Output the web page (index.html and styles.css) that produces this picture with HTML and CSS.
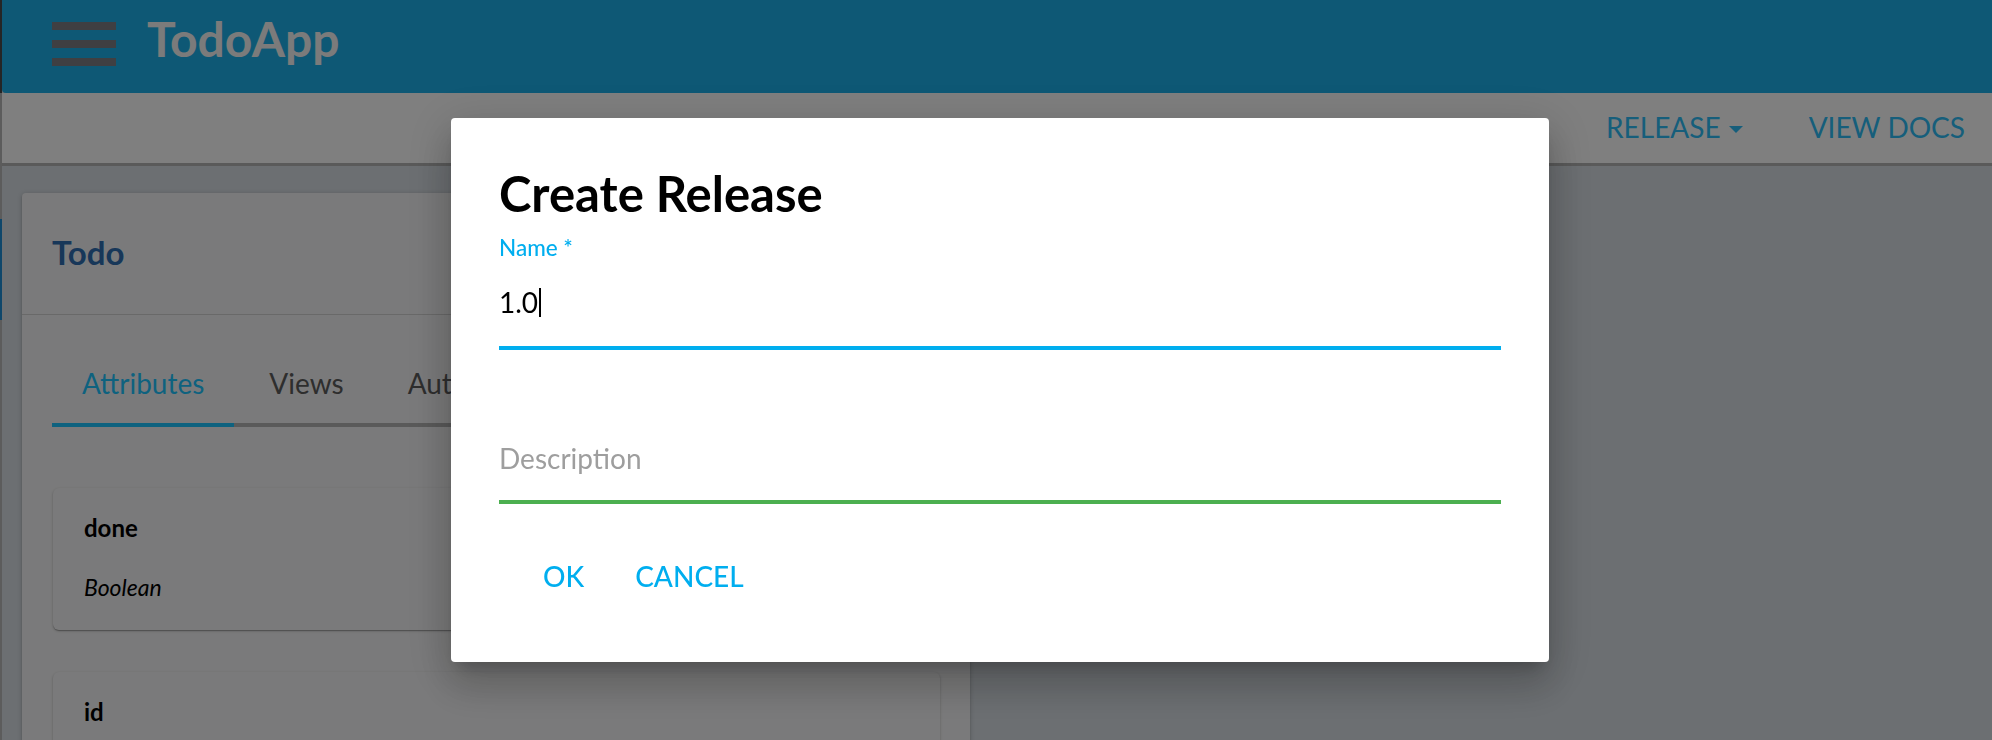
FILE: index.html
```html
<!DOCTYPE html>
<html lang="en">
<head>
<meta charset="utf-8">
<title>TodoApp</title>
<link rel="stylesheet" href="styles.css">
</head>
<body>
<div class="edge"><span class="edge-top"></span><span class="edge-mid"></span><span class="edge-blue"></span><span class="edge-low"></span></div>
<div class="app">
  <header class="appbar">
    <span class="burger"><i></i><i></i><i></i></span>
    <span class="brand">TodoApp</span>
  </header>
  <nav class="toolbar">
    <a class="tb-btn">RELEASE<span class="caret"></span></a>
    <a class="tb-btn">VIEW DOCS</a>
  </nav>
  <main class="content">
    <section class="card">
      <div class="card-head"><h2 class="card-title">Todo</h2></div>
      <div class="card-body">
        <div class="tabs">
          <div class="tab active">Attributes</div>
          <div class="tab second">Views</div>
          <div class="tab third">Authorization</div>
          <div class="tab-rest"></div>
        </div>
        <div class="attr-list">
          <div class="attr">
            <div class="attr-name">done</div>
            <div class="attr-type">Boolean</div>
          </div>
          <div class="attr">
            <div class="attr-name">id</div>
          </div>
        </div>
      </div>
    </section>
  </main>
</div>
<div class="backdrop">
  <div class="dialog">
    <h1 class="dialog-title">Create Release</h1>
    <div class="field focused">
      <div class="field-label">Name *</div>
      <div class="field-input">1.0<span class="cursor"></span></div>
    </div>
    <div class="field desc">
      <div class="field-placeholder">Description</div>
    </div>
    <div class="actions">
      <button class="btn">OK</button>
      <button class="btn">CANCEL</button>
    </div>
  </div>
</div>
</body>
</html>
```
FILE: styles.css
```css
html, body {
  margin: 0;
  height: 100%;
}
body {
  font-family: Lato, "Liberation Sans", sans-serif;
  background: #d8dee4;
  display: flex;
  overflow: hidden;
  line-height: 1.2;
}
.edge {
  width: 2px;
  display: flex;
  flex-direction: column;
  flex: none;
}
.edge-top { height: 93px; background: #4a4a4a; }
.edge-mid { height: 126px; background: #b8b8b8; }
.edge-blue { height: 101px; background: #1d8fd6; }
.edge-low { flex: 1; background: #b8b8b8; }

.app {
  flex: 1;
  display: flex;
  flex-direction: column;
  min-width: 0;
}
.appbar {
  height: 93px;
  box-sizing: border-box;
  background: #1cb0ea;
  display: flex;
  align-items: center;
  padding: 0 0 5px 50px;
  border-radius: 0 0 0 4px;
  flex: none;
}
.burger {
  display: flex;
  flex-direction: column;
  gap: 10px;
  width: 64px;
}
.burger i {
  display: block;
  height: 8px;
  background: #7e7e84;
}
.brand {
  margin-left: 31px;
  margin-bottom: 11px;
  font-size: 48px;
  font-weight: 700;
  color: #f6f6f6;
}
.toolbar {
  height: 70px;
  flex: none;
  background: #fff;
  border-bottom: 3px solid #b4b4b4;
  display: flex;
  justify-content: flex-end;
  align-items: center;
  gap: 66px;
  padding-right: 27px;
}
.tb-btn {
  font-size: 28px;
  color: #2cbcf6;
  display: flex;
  align-items: center;
}
.caret {
  width: 0;
  height: 0;
  border-left: 7.5px solid transparent;
  border-right: 7.5px solid transparent;
  border-top: 7px solid #2cbcf6;
  margin-left: 8px;
  margin-top: 3px;
}
.content {
  padding: 27px 0 0 20px;
}
.card {
  width: 948px;
  background: #f5f5f6;
  border-radius: 4px;
  box-shadow: 0 1px 5px rgba(0,0,0,0.2), 0 2px 2px rgba(0,0,0,0.14);
  padding-bottom: 40px;
}
.card-head {
  height: 122px;
  box-sizing: border-box;
  border-bottom: 1px solid #d2d2d2;
  display: flex;
  align-items: center;
  padding: 0 30px 2px;
}
.card-title {
  margin: 0;
  font-size: 33px;
  font-weight: 700;
  color: #2f6eb2;
}
.card-body {
  padding: 29px 30px 0;
}
.tabs {
  display: flex;
}
.tab {
  height: 79px;
  line-height: 79px;
  padding: 0 30px;
  font-size: 28px;
  color: #5c5c5c;
  border-bottom: 4px solid #b4b4b4;
  white-space: nowrap;
}
.tab.second { padding: 0 35px; }
.tab.third { padding: 0 29px; }
.tab.active {
  color: #1cc4ff;
  border-bottom-color: #1cc4ff;
}
.tab-rest {
  flex: 1;
  border-bottom: 4px solid #b4b4b4;
}
.attr-list {
  margin-top: 61px;
  display: flex;
  flex-direction: column;
  gap: 42px;
  padding-left: 1px;
}
.attr {
  height: 142px;
  box-sizing: border-box;
  background: #f5f5f6;
  border-radius: 6px;
  box-shadow: 0 1px 3px rgba(0,0,0,0.22), 0 1px 1px rgba(0,0,0,0.14), 0 2px 1px -1px rgba(0,0,0,0.12);
  padding: 26px 31px 0;
}
.attr-name {
  font-size: 24px;
  font-weight: 700;
  color: #000;
  line-height: 27px;
}
.attr-type {
  margin-top: 33px;
  font-size: 23px;
  font-style: italic;
  color: #000;
}

.backdrop {
  position: fixed;
  inset: 0;
  background: rgba(0,0,0,0.5);
  display: flex;
  justify-content: center;
  align-items: flex-start;
  padding: 118px 0 0 8px;
}
.dialog {
  width: 1098px;
  box-sizing: border-box;
  background: #fff;
  border-radius: 4px;
  padding: 46px 48px 57px;
  box-shadow: 0 11px 15px -7px rgba(0,0,0,0.2), 0 24px 38px 3px rgba(0,0,0,0.14), 0 9px 46px 8px rgba(0,0,0,0.12);
}
.dialog-title {
  margin: 0;
  font-size: 49px;
  font-weight: 700;
  color: #000;
}
.field-label {
  margin-top: 12.7px;
  font-size: 22.5px;
  line-height: 26.4px;
  font-weight: 500;
  color: #00aeef;
}
.field-input {
  margin-top: 23.7px;
  font-size: 28px;
  color: #000;
  display: flex;
  align-items: center;
}
.cursor {
  width: 1.5px;
  height: 29px;
  background: #000;
  margin-left: 1px;
}
.field.focused {
  padding-bottom: 27px;
  border-bottom: 4px solid #00aeef;
}
.field.desc {
  padding-top: 91.4px;
  padding-bottom: 25px;
  border-bottom: 4px solid #4caf50;
}
.field-placeholder {
  font-size: 28px;
  color: #9e9e9e;
}
.actions {
  margin-top: 43.4px;
  margin-left: 20px;
  display: flex;
  gap: 3px;
}
.btn {
  font-family: Lato, "Liberation Sans", sans-serif;
  font-size: 28px;
  line-height: 1.2;
  font-weight: 500;
  color: #00aeef;
  background: none;
  border: 0;
  padding: 12px 24px;
  cursor: pointer;
}
```
